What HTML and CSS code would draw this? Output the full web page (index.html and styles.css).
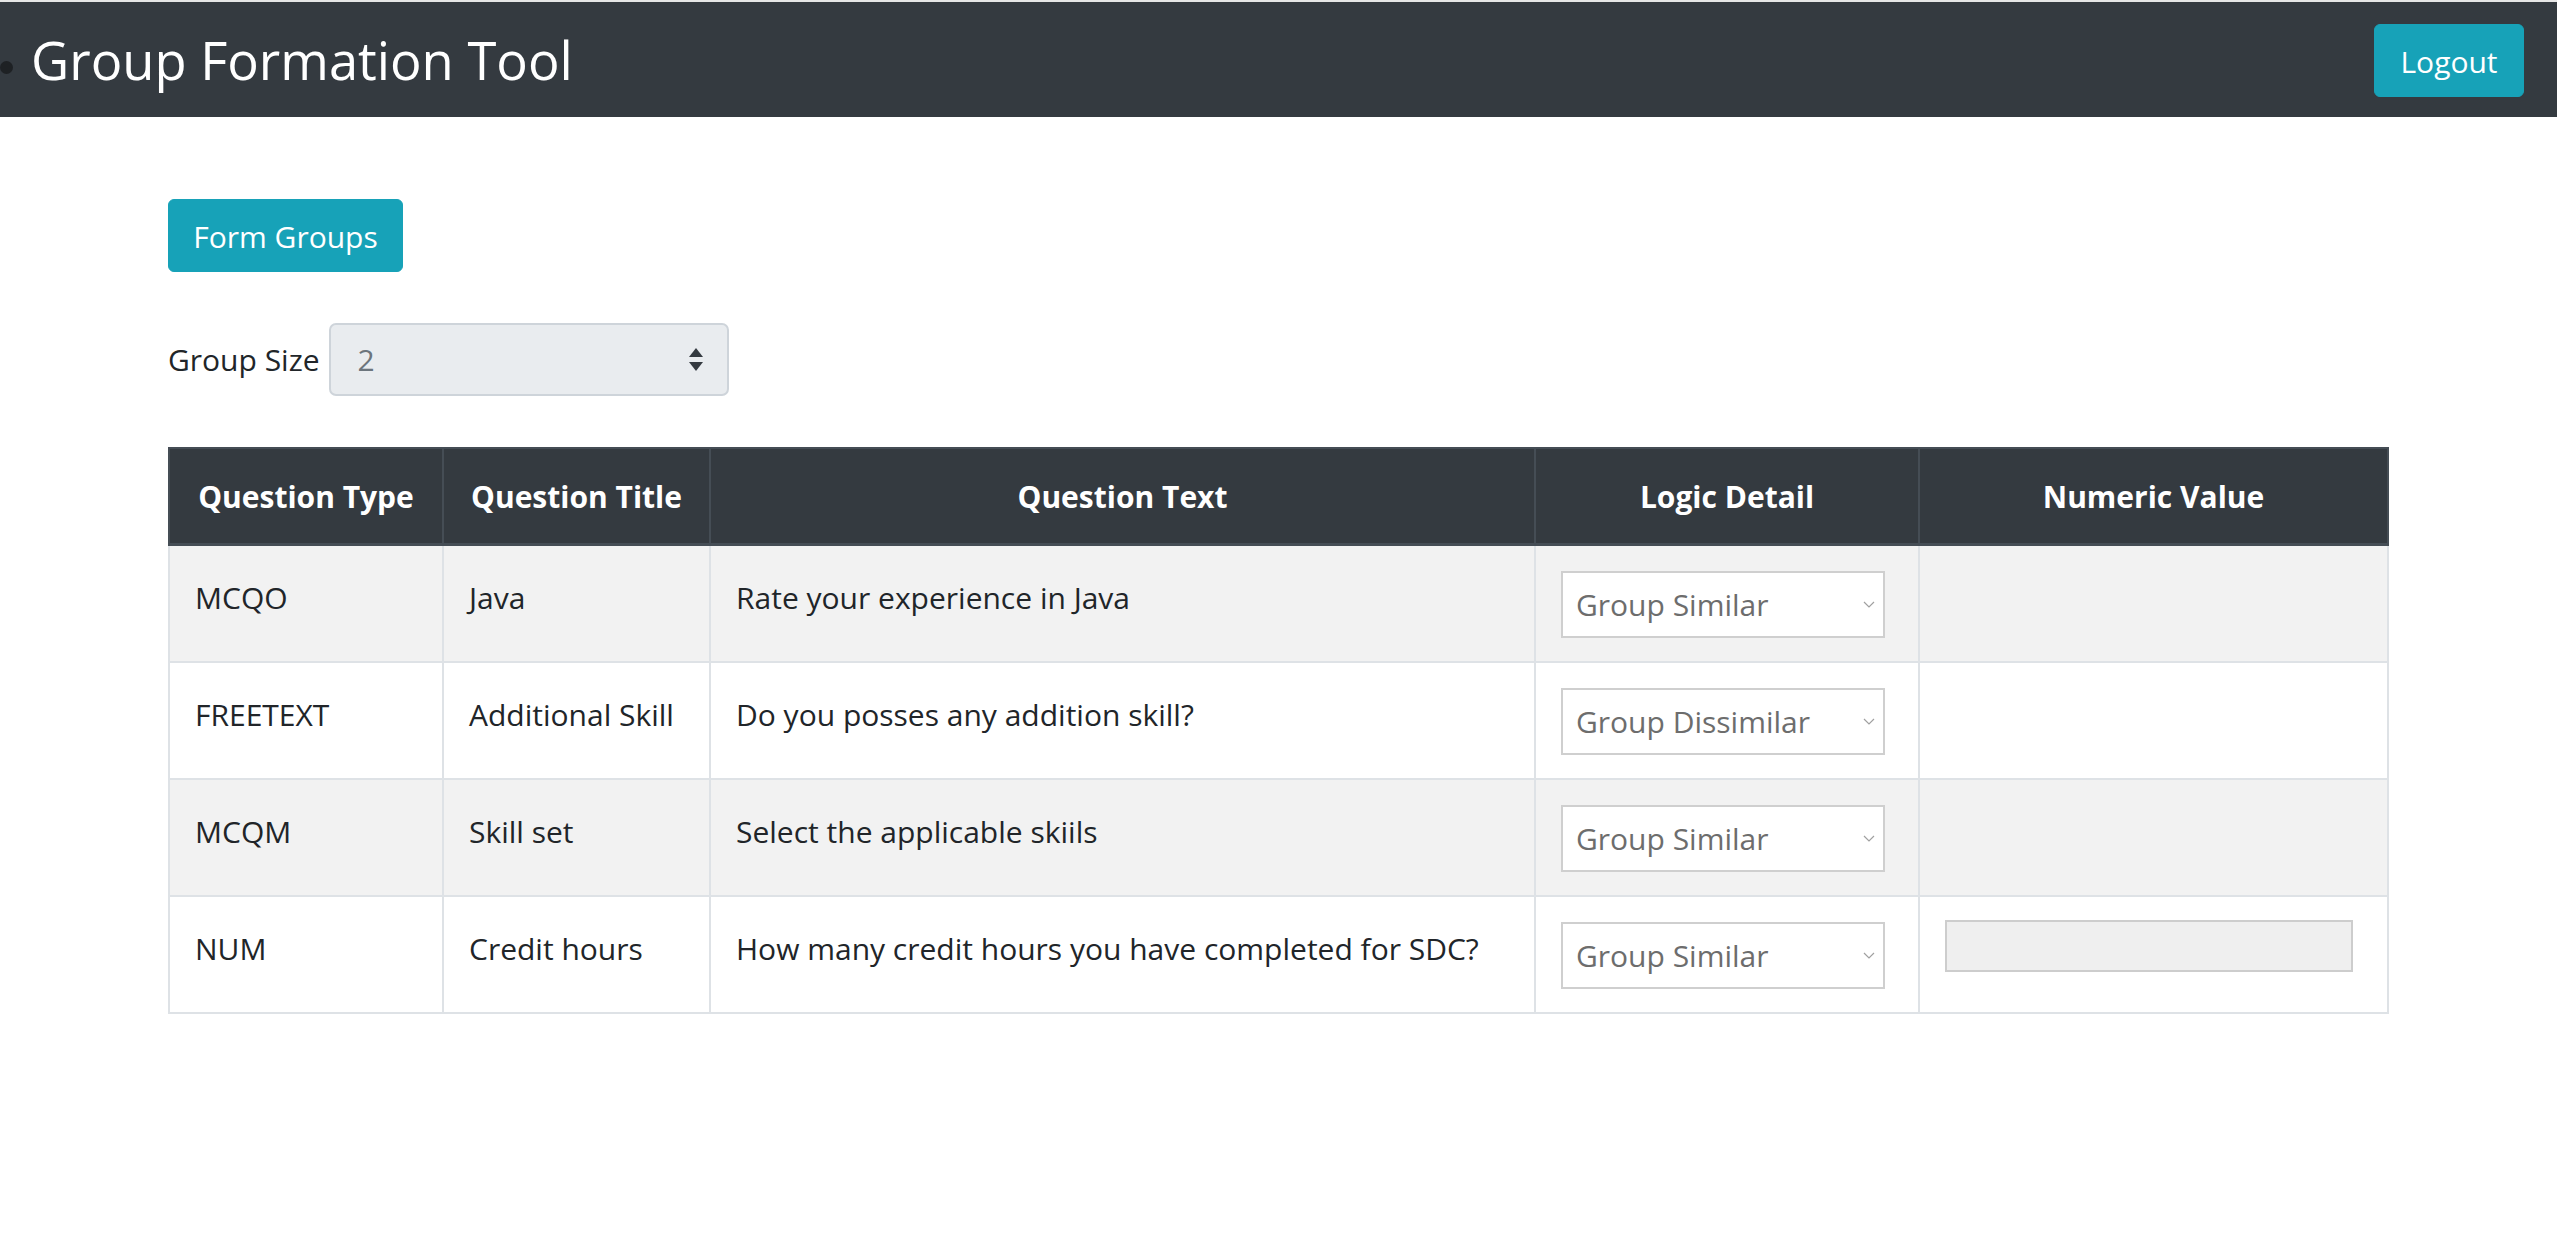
FILE: index.html
```html
<!DOCTYPE html>
<html lang="en">
<head>
<meta charset="utf-8">
<title>Group Formation Tool</title>
<link rel="stylesheet" href="styles.css">
</head>
<body>
<nav class="navbar">
  <div class="brand"><span class="dot"></span><h1 class="title">Group Formation Tool</h1></div>
  <button class="btn btn-info btn-logout">Logout</button>
</nav>
<main class="content">
  <button class="btn btn-info btn-form">Form Groups</button>
  <div class="size-row">
    <label class="size-label">Group Size</label>
    <div class="size-select-wrap">
      <select class="size-select" disabled><option>2</option></select>
      <svg class="size-arrows" width="16" height="26" viewBox="0 0 16 26"><path d="M8 1 L15 10 L1 10 Z" fill="#343a40"/><path d="M1 15 L15 15 L8 24 Z" fill="#343a40"/></svg>
    </div>
  </div>
  <table class="qtable">
    <colgroup><col class="c1"><col class="c2"><col class="c3"><col class="c4"><col class="c5"></colgroup>
    <thead>
      <tr><th>Question Type</th><th>Question Title</th><th>Question Text</th><th>Logic Detail</th><th>Numeric Value</th></tr>
    </thead>
    <tbody>
      <tr class="odd">
        <td>MCQO</td><td>Java</td><td>Rate your experience in Java</td>
        <td><div class="logic-wrap"><select class="logic"><option>Group Similar</option><option>Group Dissimilar</option></select><svg class="chev" width="12" height="8" viewBox="0 0 12 8"><path d="M1 1 L6 6 L11 1" fill="none" stroke="#a0a0a0" stroke-width="1.2"/></svg></div></td>
        <td></td>
      </tr>
      <tr>
        <td>FREETEXT</td><td>Additional Skill</td><td>Do you posses any addition skill?</td>
        <td><div class="logic-wrap"><select class="logic"><option>Group Dissimilar</option><option>Group Similar</option></select><svg class="chev" width="12" height="8" viewBox="0 0 12 8"><path d="M1 1 L6 6 L11 1" fill="none" stroke="#a0a0a0" stroke-width="1.2"/></svg></div></td>
        <td></td>
      </tr>
      <tr class="odd">
        <td>MCQM</td><td>Skill set</td><td>Select the applicable skiils</td>
        <td><div class="logic-wrap"><select class="logic"><option>Group Similar</option><option>Group Dissimilar</option></select><svg class="chev" width="12" height="8" viewBox="0 0 12 8"><path d="M1 1 L6 6 L11 1" fill="none" stroke="#a0a0a0" stroke-width="1.2"/></svg></div></td>
        <td></td>
      </tr>
      <tr>
        <td>NUM</td><td>Credit hours</td><td>How many credit hours you have completed for SDC?</td>
        <td><div class="logic-wrap"><select class="logic"><option>Group Similar</option><option>Group Dissimilar</option></select><svg class="chev" width="12" height="8" viewBox="0 0 12 8"><path d="M1 1 L6 6 L11 1" fill="none" stroke="#a0a0a0" stroke-width="1.2"/></svg></div></td>
        <td><input class="num" type="number" disabled></td>
      </tr>
    </tbody>
  </table>
</main>
</body>
</html>
```
FILE: styles.css
```css
html, body {
  margin: 0;
  padding: 0;
  background: #fff;
}
body {
  font-family: "Open Sans", "Noto Sans", sans-serif;
  color: #212529;
  font-size: 30px;
  border-top: 2px solid #e6e6e6;
}
.navbar {
  height: 115px;
  background: #343a40;
  display: flex;
  align-items: center;
  justify-content: space-between;
  padding-right: 33px;
}
.brand {
  display: flex;
  align-items: center;
}
.dot {
  width: 13px;
  height: 13px;
  border-radius: 50%;
  background: #1e2124;
  margin-top: 16px;
  margin-right: 18px;
}
.title {
  margin: 0;
  font-weight: 400;
  font-size: 52.5px;
  line-height: 1.2;
  color: #fff;
}
.btn {
  font-family: inherit;
  border: 1px solid #17a2b8;
  background: #17a2b8;
  color: #fff;
  border-radius: 6px;
  cursor: pointer;
  padding: 0;
}
.btn-logout {
  width: 150px;
  height: 73px;
  font-size: 30px;
  padding-top: 3px;
  margin-top: 1px;
}
.content {
  padding: 82px 0 0 168px;
}
.btn-form {
  width: 235px;
  height: 73px;
  font-size: 30px;
  padding-top: 2px;
  display: block;
}
.size-row {
  display: flex;
  align-items: center;
  margin-top: 51px;
}
.size-label {
  font-size: 30px;
  margin-right: 9px;
}
.size-select-wrap {
  position: relative;
  width: 400px;
  height: 73px;
}
.size-select {
  -webkit-appearance: none;
  appearance: none;
  width: 100%;
  height: 100%;
  background: #e9ecef;
  border: 2px solid #ced4da;
  border-radius: 7px;
  color: #6c757d;
  font-family: inherit;
  font-size: 30px;
  padding: 0 0 0 27px;
  opacity: 1;
}
.size-arrows {
  position: absolute;
  right: 25px;
  top: 24px;
}
.qtable {
  margin-top: 51px;
  width: 2219px;
  border-collapse: collapse;
  table-layout: fixed;
}
.c1 { width: 274px; }
.c2 { width: 267px; }
.c3 { width: 825px; }
.c4 { width: 384px; }
.c5 { width: 469px; }
.qtable th {
  background: #343a40;
  color: #fff;
  font-weight: 700;
  font-size: 30px;
  height: 94px;
  padding: 0 10px;
  text-align: center;
  vertical-align: middle;
  border: 2px solid #454d55;
  border-bottom-width: 3px;
  white-space: nowrap;
}
.qtable td {
  height: 89px;
  padding: 26px 25px 0;
  vertical-align: top;
  line-height: 52px;
  border: 2px solid #dee2e6;
  white-space: nowrap;
}
.qtable tr.odd td {
  background: #f2f2f2;
}
.logic-wrap {
  position: relative;
  width: 324px;
  height: 67px;
  margin-top: -1px;
}
.logic {
  -webkit-appearance: none;
  appearance: none;
  width: 100%;
  height: 100%;
  background: #fff;
  border: 2px solid #cfcfcf;
  border-radius: 0;
  color: #6d6d6d;
  font-family: inherit;
  font-size: 30px;
  padding: 0 0 0 13px;
}
.chev {
  position: absolute;
  right: 10px;
  top: 30px;
}
.num {
  display: block;
  width: 408px;
  height: 52px;
  box-sizing: border-box;
  background: #efefef;
  border: 2px solid #cdcdcd;
  margin-top: -3px;
}
```
